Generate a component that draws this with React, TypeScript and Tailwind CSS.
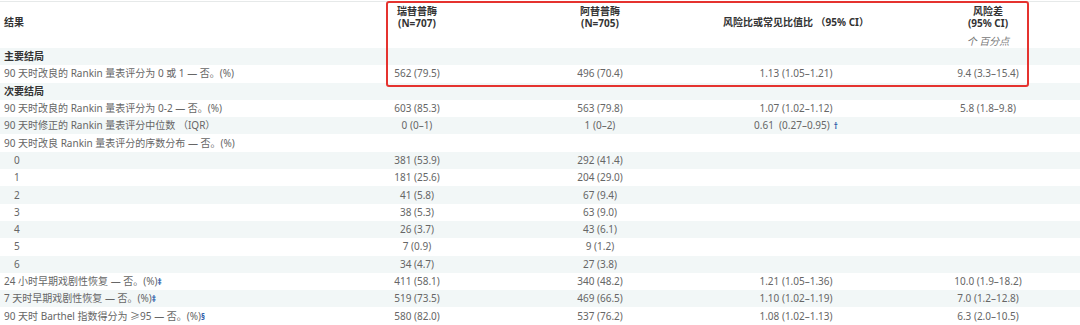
import React from 'react';

type Row = {
  label: string;
  mark?: string;
  bold?: boolean;
  indent?: boolean;
  a?: string;
  b?: string;
  ratio?: string;
  ratioMark?: string;
  diff?: string;
};

const rows: Row[] = [
  { label: '主要结局', bold: true },
  { label: '90 天时改良的 Rankin 量表评分为 0 或 1 — 否。(%)', a: '562 (79.5)', b: '496 (70.4)', ratio: '1.13 (1.05–1.21)', diff: '9.4 (3.3–15.4)' },
  { label: '次要结局', bold: true },
  { label: '90 天时改良的 Rankin 量表评分为 0-2 — 否。(%)', a: '603 (85.3)', b: '563 (79.8)', ratio: '1.07 (1.02–1.12)', diff: '5.8 (1.8–9.8)' },
  { label: '90 天时修正的 Rankin 量表评分中位数 （IQR）', a: '0 (0–1)', b: '1 (0–2)', ratio: '0.61\u00a0\u00a0(0.27–0.95)', ratioMark: '†' },
  { label: '90 天时改良 Rankin 量表评分的序数分布 — 否。(%)' },
  { label: '0', indent: true, a: '381 (53.9)', b: '292 (41.4)' },
  { label: '1', indent: true, a: '181 (25.6)', b: '204 (29.0)' },
  { label: '2', indent: true, a: '41 (5.8)', b: '67 (9.4)' },
  { label: '3', indent: true, a: '38 (5.3)', b: '63 (9.0)' },
  { label: '4', indent: true, a: '26 (3.7)', b: '43 (6.1)' },
  { label: '5', indent: true, a: '7 (0.9)', b: '9 (1.2)' },
  { label: '6', indent: true, a: '34 (4.7)', b: '27 (3.8)' },
  { label: '24 小时早期戏剧性恢复 — 否。(%)', mark: '‡', a: '411 (58.1)', b: '340 (48.2)', ratio: '1.21 (1.05–1.36)', diff: '10.0 (1.9–18.2)' },
  { label: '7 天时早期戏剧性恢复 — 否。(%)', mark: '‡', a: '519 (73.5)', b: '469 (66.5)', ratio: '1.10 (1.02–1.19)', diff: '7.0 (1.2–12.8)' },
  { label: '90 天时 Barthel 指数得分为 ≥95 — 否。(%)', mark: '§', a: '580 (82.0)', b: '537 (76.2)', ratio: '1.08 (1.02–1.13)', diff: '6.3 (2.0–10.5)' },
];

const grid = 'grid grid-cols-[330px_174px_192px_200px_184px]';

const App: React.FC = () => {
  return (
    <div className="relative w-[1080px] h-[325px] overflow-hidden bg-white pt-[1px] font-['Noto_Sans','Noto_Sans_CJK_SC',sans-serif] text-[10px] leading-[11px] text-[#666]">
      <div className="border-t border-[#e6e9e9]">
        {/* header */}
        <div className={`${grid} h-[46px] font-bold text-[#333] leading-[12px]`}>
          <div className="pl-[4px] pt-[14px]">结果</div>
          <div className="flex flex-col items-center pt-[3px]">
            <span>瑞替普酶</span>
            <span>(N=707)</span>
          </div>
          <div className="flex flex-col items-center pt-[3px]">
            <span>阿替普酶</span>
            <span>(N=705)</span>
          </div>
          <div className="flex flex-col items-center pt-[14px]">
            <span>风险比或常见比值比 （95% CI）</span>
          </div>
          <div className="flex flex-col items-center pt-[3px]">
            <span>风险差</span>
            <span>(95% CI)</span>
            <span className="mt-[6px] italic font-normal text-[#777]">个 百分点</span>
          </div>
        </div>

        {rows.map((r, i) => (
          <div key={i} className={`${grid} h-[17.3px] items-center ${i % 2 === 0 ? 'bg-[#f2f7f7]' : 'bg-white'}`}>
            <div className={`${r.indent ? 'pl-[14px]' : 'pl-[4px]'} whitespace-nowrap ${r.bold ? 'font-bold text-[#333]' : ''}`}>
              {r.label}
              {r.mark && <span className="text-[8px] text-[#2456a6] font-bold">{r.mark}</span>}
            </div>
            <div className="text-center">{r.a}</div>
            <div className="text-center">{r.b}</div>
            <div className="text-center whitespace-nowrap">
              {r.ratio}
              {r.ratioMark && <span className="ml-[4px] text-[8px] font-bold text-[#2456a6]">{r.ratioMark}</span>}
            </div>
            <div className="text-center">{r.diff}</div>
          </div>
        ))}
      </div>

      {/* highlight box */}
      <div className="absolute left-[386px] top-[1px] w-[643px] h-[86px] border-2 border-[#e5332f] rounded-[3px]" />
    </div>
  );
};

export default App;
